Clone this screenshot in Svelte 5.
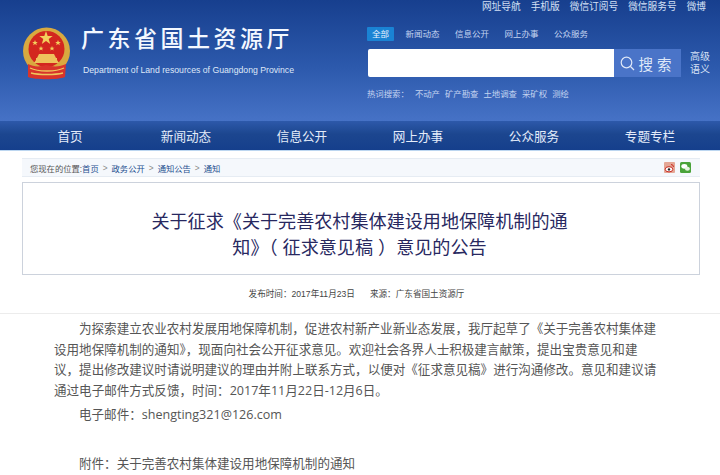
<script>
  const topLinks = ['网址导航', '手机版', '微信订阅号', '微信服务号', '微博'];
  const tabs = ['全部', '新闻动态', '信息公开', '网上办事', '公众服务'];
  const hotWords = ['不动产', '矿产勘查', '土地调查', '采矿权', '测绘'];
  const navItems = ['首页', '新闻动态', '信息公开', '网上办事', '公众服务', '专题专栏'];
  const crumbs = ['首页', '政务公开', '通知公告', '通知'];
</script>

<header class="header">
  <div class="brand">
    <svg class="emblem" width="50" height="54" viewBox="0 0 50 54">
      <circle cx="24.5" cy="24" r="23.5" fill="#d9a93f" />
      <circle cx="24.5" cy="22" r="18" fill="#d3261f" />
      <path d="M24 4l1.700 5h5l-4 3 1.500 5-4.200-3-4.200 3 1.500-5-4-3h5z" fill="#f3cf5c" />
      <path d="M13 13l.8 2h2l-1.600 1.300.6 2-1.800-1.200-1.800 1.200.6-2-1.600-1.300h2zM36 13l.8 2h2l-1.600 1.300.6 2-1.800-1.200-1.800 1.200.6-2-1.600-1.300h2zM19 19l.7 1.700h1.800l-1.400 1.100.5 1.800-1.600-1-1.600 1 .5-1.800-1.400-1.100h1.800zM30 19l.7 1.700h1.800l-1.400 1.100.5 1.800-1.600-1-1.600 1 .5-1.800-1.400-1.100h1.800z" fill="#f3cf5c" />
      <path d="M14 31h21v2l2 3H12l2-3zM17 27h15l2 4H15z" fill="#eec25c" />
      <path d="M6 37c6 3 12 3 18 1 7 2 14 2 20-1l-1 13c-6 3-31 3-37 0z" fill="#d8342b" />
      <path d="M8 41c8 4 26 4 34 0M9 46c8 2 24 2 32 0" fill="none" stroke="#efc65c" stroke-width="1.300" />
    </svg>
    <div class="brand-text">
      <div class="brand-title">广东省国土资源厅</div>
      <div class="brand-sub">Department of Land resources of Guangdong Province</div>
    </div>
  </div>

  <div class="tools">
    <div class="top-links">
      {#each topLinks as link}
        <span>{link}</span>
      {/each}
    </div>
    <div class="tabs">
      {#each tabs as tab, i}
        <span class="tab" class:active={i === 0}>{tab}</span>
      {/each}
    </div>
    <div class="search-row">
      <div class="search-input"></div>
      <div class="search-btn">
        <svg width="15" height="15" viewBox="0 0 15 15" fill="none" stroke="#dfe8f8" stroke-width="1.200">
          <circle cx="6.500" cy="6.500" r="5.300" />
          <path d="M10.500 10.500l3.500 3.500" />
        </svg>
        <span>搜 索</span>
      </div>
      <div class="search-links">
        <span>高级</span>
        <span>语义</span>
      </div>
    </div>
    <div class="hot">
      <span class="hot-label">热词搜索：</span>
      {#each hotWords as word}
        <span>{word}</span>
      {/each}
    </div>
  </div>
</header>

<nav class="nav">
  {#each navItems as item}
    <span>{item}</span>
  {/each}
</nav>

<main class="main">
  <div class="crumbs">
    <div class="trail">
      <span class="here">您现在的位置:</span>
      {#each crumbs as crumb, i}
        {#if i > 0}<span class="sep">&gt;</span>{/if}
        <span class="crumb">{crumb}</span>
      {/each}
    </div>
    <div class="share">
      <svg width="11" height="11" viewBox="0 0 11 11">
        <rect width="11" height="11" rx="1" fill="#e4a796" />
        <ellipse cx="5" cy="7.300" rx="3.800" ry="2.600" fill="#fff" stroke="#c9281f" />
        <circle cx="5" cy="7.400" r="1.200" fill="#222" />
        <path d="M7 2.500a2.500 2.500 0 0 1 2.500 2.500" fill="none" stroke="#c9281f" />
      </svg>
      <svg width="11" height="11" viewBox="0 0 11 11">
        <rect width="11" height="11" rx="1.500" fill="#4aa33a" />
        <ellipse cx="4.300" cy="4.300" rx="3" ry="2.400" fill="#fff" />
        <ellipse cx="7.400" cy="6.800" rx="2.500" ry="2" fill="#e8f5e2" />
      </svg>
    </div>
  </div>

  <div class="title-box">
    <h1>关于征求《关于完善农村集体建设用地保障机制的通<br />知》（ 征求意见稿 ）意见的公告</h1>
  </div>

  <div class="meta">
    <span>发布时间：2017年11月23日</span>
    <span>来源：广东省国土资源厅</span>
  </div>

  <article class="article">
    <p class="lead">为探索建立农业农村发展用地保障机制，促进农村新产业新业态发展，我厅起草了《关于完善农村集体建<br />设用地保障机制的通知》，现面向社会公开征求意见。欢迎社会各界人士积极建言献策，提出宝贵意见和建<br />议，提出修改建议时请说明建议的理由并附上联系方式，以便对《征求意见稿》进行沟通修改。意见和建议请<br />通过电子邮件方式反馈，时间：2017年11月22日-12月6日。</p>
    <p class="email">电子邮件：shengting321@126.com</p>
    <p class="attach">附件：关于完善农村集体建设用地保障机制的通知</p>
  </article>
</main>

<style>
  :global(body) {
    margin: 0;
    background: #fff;
    overflow: hidden;
    font-family: "Liberation Sans", "Noto Sans CJK SC", sans-serif;
  }

  .header {
    height: 121px;
    box-sizing: border-box;
    display: flex;
    justify-content: space-between;
    background: linear-gradient(#173f8e, #2c59ac 55%, #4672c6);
  }

  .brand {
    display: flex;
    gap: 11px;
    padding: 27px 0 0 22px;
  }

  .brand-title {
    margin: -2px 0 0 -2px;
    font-size: 23px;
    line-height: 28px;
    font-weight: 500;
    letter-spacing: 3.500px;
    color: #f4f8ff;
  }

  .brand-sub {
    margin-top: 11px;
    font-size: 8.700px;
    line-height: 12px;
    color: #dfe8f8;
    white-space: nowrap;
  }

  .tools {
    width: 353px;
    box-sizing: border-box;
  }

  .top-links {
    display: flex;
    justify-content: flex-end;
    gap: 10px;
    padding: 1px 14px 0 0;
    font-size: 9.700px;
    line-height: 12px;
    color: #d5e0f5;
  }

  .tabs {
    display: flex;
    gap: 15.500px;
    align-items: center;
    margin-top: 14px;
    font-size: 8.500px;
    line-height: 14px;
    color: #c3d3f0;
  }

  .tab.active {
    padding: 0 5px;
    margin-right: -4px;
    background: #1a83d4;
    color: #e8f2ff;
    border-radius: 1px;
  }

  .search-row {
    display: flex;
    align-items: stretch;
    margin: 8px 0 0 1px;
    height: 28px;
  }

  .search-input {
    width: 246px;
    background: #fff;
    border-radius: 2px 0 0 2px;
  }

  .search-btn {
    width: 67px;
    display: flex;
    align-items: center;
    justify-content: center;
    gap: 3px;
    padding-right: 3px;
    box-sizing: border-box;
    background: #4a74c8;
    font-size: 14.500px;
    color: #dfe8f8;
  }

  .search-links {
    display: flex;
    flex-direction: column;
    justify-content: center;
    margin-left: 9px;
    font-size: 10px;
    line-height: 13.500px;
    color: #d5e0f5;
  }

  .hot {
    display: flex;
    gap: 5px;
    margin-top: 11px;
    font-size: 8.400px;
    line-height: 12px;
    color: #c3d3f0;
  }

  .hot-label {
    margin-right: 1px;
  }

  .nav {
    height: 29px;
    padding-left: 12px;
    display: grid;
    grid-template-columns: repeat(6, 116px);
    align-items: center;
    justify-items: center;
    background: linear-gradient(#2d59aa, #1c468f 45%, #153f8c);
    border-bottom: 1px solid #bcd6f0;
    font-size: 12.600px;
    color: #e4ecfa;
  }

  .main {
    padding: 7px 20px 0 22px;
  }

  .crumbs {
    height: 17px;
    display: flex;
    justify-content: space-between;
    align-items: center;
    padding: 0 9px 0 8px;
    background: #f5f8fc;
    border-top: 1px solid #e6ecf3;
    border-bottom: 1px solid #e6ecf3;
    font-size: 8.300px;
    color: #555;
  }

  .trail {
    display: flex;
    align-items: center;
    gap: 3px;
  }

  .here {
    margin-right: -3px;
  }

  .crumb {
    color: #1d4f8f;
  }

  .sep {
    color: #888;
    margin: 0 1px;
  }

  .share {
    display: flex;
    gap: 5px;
  }

  .title-box {
    margin-top: 5px;
    height: 93px;
    padding-top: 13px;
    display: flex;
    align-items: center;
    justify-content: center;
    border: 1px solid #ccd2dc;
    box-sizing: border-box;
  }

  h1 {
    margin: 0;
    margin-right: 3px;
    font-size: 18.100px;
    line-height: 26px;
    font-weight: 400;
    text-align: center;
    color: #28285f;
  }

  .meta {
    display: flex;
    justify-content: center;
    gap: 15px;
    margin-top: 13px;
    padding-right: 9px;
    font-size: 8.600px;
    line-height: 12px;
    color: #444;
  }

  .article {
    margin: 13px -20px 0 -22px;
    padding: 5px 0 0 54px;
    border-top: 1px solid #ececec;
    font-family: "Open Sans", "Noto Sans CJK SC", sans-serif;
    font-size: 12.550px;
    line-height: 20.600px;
    color: #555;
    white-space: nowrap;
  }

  .article p {
    margin: 0;
  }

  .lead {
    text-indent: 25px;
  }

  .email {
    margin-top: 4px !important;
    padding-left: 25px;
  }

  .attach {
    margin-top: 28px !important;
    padding-left: 25px;
  }
</style>
